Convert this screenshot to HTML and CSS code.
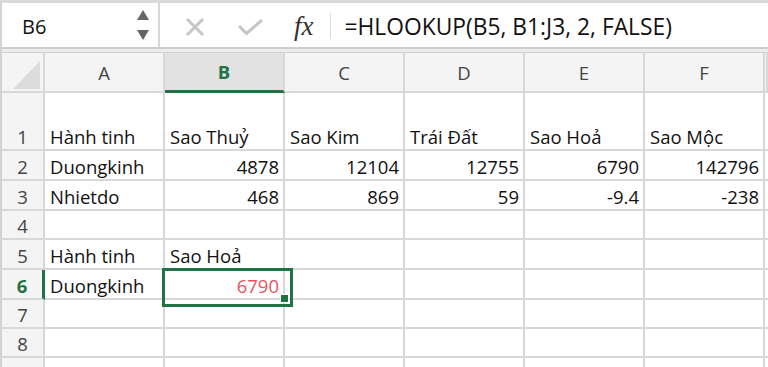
FILE: index.html
```html
<!DOCTYPE html>
<html lang="vi">
    <head>
        <meta charset="UTF-8" />
        <meta name="viewport" content="width=device-width, initial-scale=1.0" />
        <title>HLOOKUP</title>
        <link rel="stylesheet" href="styles.css">
    </head>
    <body>
        <div class="app">
            <div class="formula-bar">
                <div class="name-box">
                    <span class="ref">B6</span>
                    <div class="spinner">
                        <svg width="12" height="10" viewBox="0 0 12 10"><polygon points="6,0 12,10 0,10" fill="#666"/></svg>
                        <svg width="12" height="10" viewBox="0 0 12 10"><polygon points="0,0 12,0 6,10" fill="#666"/></svg>
                    </div>
                </div>
                <svg class="icon-x" width="20" height="20" viewBox="0 0 20 20">
                    <path d="M2 2 L18 18 M18 2 L2 18" stroke="#c6c6c6" stroke-width="3" fill="none"/>
                </svg>
                <svg class="icon-ok" width="27" height="18" viewBox="0 0 27 18">
                    <path d="M2 8 L9.5 15.5 L25 2" stroke="#c6c6c6" stroke-width="3" fill="none"/>
                </svg>
                <span class="fx">fx</span>
                <span class="sep"></span>
                <div class="formula">=HLOOKUP(B5, B1:J3, 2, FALSE)</div>
            </div>
            <div class="bar-gap"></div>

            <div class="sheet">
                <div class="row head">
                    <div class="cell corner"><span class="tri"></span></div>
                    <div class="cell ch">A</div>
                    <div class="cell ch active">B</div>
                    <div class="cell ch">C</div>
                    <div class="cell ch">D</div>
                    <div class="cell ch">E</div>
                    <div class="cell ch">F</div>
                    <div class="cell ch"></div>
                </div>
                <div class="row tall">
                    <div class="cell rh">1</div>
                    <div class="cell">Hành tinh</div>
                    <div class="cell">Sao Thuỷ</div>
                    <div class="cell">Sao Kim</div>
                    <div class="cell">Trái Đất</div>
                    <div class="cell">Sao Hoả</div>
                    <div class="cell">Sao Mộc</div>
                    <div class="cell"></div>
                </div>
                <div class="row">
                    <div class="cell rh">2</div>
                    <div class="cell">Duongkinh</div>
                    <div class="cell num">4878</div>
                    <div class="cell num">12104</div>
                    <div class="cell num">12755</div>
                    <div class="cell num">6790</div>
                    <div class="cell num">142796</div>
                    <div class="cell"></div>
                </div>
                <div class="row">
                    <div class="cell rh">3</div>
                    <div class="cell">Nhietdo</div>
                    <div class="cell num">468</div>
                    <div class="cell num">869</div>
                    <div class="cell num">59</div>
                    <div class="cell num">-9.4</div>
                    <div class="cell num">-238</div>
                    <div class="cell"></div>
                </div>
                <div class="row short">
                    <div class="cell rh">4</div>
                    <div class="cell"></div>
                    <div class="cell"></div>
                    <div class="cell"></div>
                    <div class="cell"></div>
                    <div class="cell"></div>
                    <div class="cell"></div>
                    <div class="cell"></div>
                </div>
                <div class="row">
                    <div class="cell rh">5</div>
                    <div class="cell">Hành tinh</div>
                    <div class="cell">Sao Hoả</div>
                    <div class="cell"></div>
                    <div class="cell"></div>
                    <div class="cell"></div>
                    <div class="cell"></div>
                    <div class="cell"></div>
                </div>
                <div class="row">
                    <div class="cell rh active">6</div>
                    <div class="cell">Duongkinh</div>
                    <div class="cell num selected">6790<span class="handle"></span></div>
                    <div class="cell"></div>
                    <div class="cell"></div>
                    <div class="cell"></div>
                    <div class="cell"></div>
                    <div class="cell"></div>
                </div>
                <div class="row short">
                    <div class="cell rh">7</div>
                    <div class="cell"></div>
                    <div class="cell"></div>
                    <div class="cell"></div>
                    <div class="cell"></div>
                    <div class="cell"></div>
                    <div class="cell"></div>
                    <div class="cell"></div>
                </div>
                <div class="row short">
                    <div class="cell rh">8</div>
                    <div class="cell"></div>
                    <div class="cell"></div>
                    <div class="cell"></div>
                    <div class="cell"></div>
                    <div class="cell"></div>
                    <div class="cell"></div>
                    <div class="cell"></div>
                </div>
                <div class="row">
                    <div class="cell rh"></div>
                    <div class="cell"></div>
                    <div class="cell"></div>
                    <div class="cell"></div>
                    <div class="cell"></div>
                    <div class="cell"></div>
                    <div class="cell"></div>
                    <div class="cell"></div>
                </div>
            </div>
        </div>
    </body>
</html>
```

FILE: styles.css
```css
* {
    margin: 0;
    padding: 0;
    box-sizing: border-box;
}

body {
    background: #fff;
    font-family: "Open Sans", "Liberation Sans", Arial, sans-serif;
    color: #111;
}

.app {
    width: 768px;
    height: 367px;
    overflow: hidden;
    border-top: 3px solid #dadada;
    border-left: 2px solid #d3d3d3;
}

/* formula bar */
.formula-bar {
    display: flex;
    align-items: center;
    height: 46px;
    border-bottom: 2px solid #cdcdcd;
}

.name-box {
    width: 158px;
    height: 100%;
    display: flex;
    align-items: center;
    justify-content: space-between;
    padding: 0 9px 0 20px;
    border-right: 2px solid #d6d6d6;
}

.ref {
    padding-top: 3px;
    font-size: 20px;
    color: #111;
}

.spinner {
    display: flex;
    flex-direction: column;
    gap: 10px;
}

.spinner svg {
    display: block;
}

.icon-x {
    margin-left: 25px;
    margin-top: 3px;
}

.icon-ok {
    margin-left: 32px;
    margin-top: 3px;
}

.fx {
    margin-left: 30px;
    padding-top: 2px;
    font-family: "Liberation Serif", serif;
    font-style: italic;
    font-size: 27px;
    color: #333;
    line-height: 1;
}

.sep {
    width: 1px;
    height: 26px;
    margin-left: 16px;
    margin-top: 2px;
    background: #dcdcdc;
}

.formula {
    margin-left: 14px;
    padding-top: 3px;
    font-size: 22.8px;
    color: #111;
}

.bar-gap {
    height: 4px;
    background: #ececec;
    border-bottom: 1px solid #d0d0d0;
}

/* grid */
.row {
    display: grid;
    grid-template-columns: 43px repeat(6, 120px) 1fr;
    height: 30px;
}

.row.tall {
    height: 58px;
}

.row.short {
    height: 29px;
}

.row.head {
    height: 40px;
}

.cell {
    display: flex;
    align-items: flex-end;
    padding: 0 5px 0;
    border-right: 2px solid #d8d8d8;
    border-bottom: 2px solid #d8d8d8;
    font-size: 18.5px;
    line-height: 25px;
    white-space: nowrap;
}

.cell.num {
    justify-content: flex-end;
    padding-right: 4px;
}

.cell.rh {
    justify-content: center;
    padding: 0;
    background: #f4f4f4;
    color: #444;
}

.cell.rh.active {
    border-right: 3px solid #217346;
    color: #217346;
    font-weight: bold;
}

.ch {
    align-items: center;
    justify-content: center;
    padding: 0;
    background: #f4f4f4;
    color: #444;
}

.ch.active {
    background: #e2e2e2;
    border-bottom: 3px solid #217346;
    color: #217346;
    font-weight: bold;
}

.corner {
    background: #f4f4f4;
    padding: 0 3px 2px 0;
    justify-content: flex-end;
}

.tri {
    width: 27px;
    height: 28px;
    background: #dcdcdc;
    clip-path: polygon(100% 0, 100% 100%, 0 100%);
}

.selected {
    position: relative;
    color: #e5555e;
}

.selected::after {
    content: "";
    position: absolute;
    top: -2px;
    left: -3px;
    width: 125px;
    height: 33px;
    border: 3px solid #217346;
}

.handle {
    position: absolute;
    left: 115px;
    top: 24px;
    width: 9px;
    height: 9px;
    background: #217346;
    border: 1px solid #fff;
    z-index: 1;
}
```
